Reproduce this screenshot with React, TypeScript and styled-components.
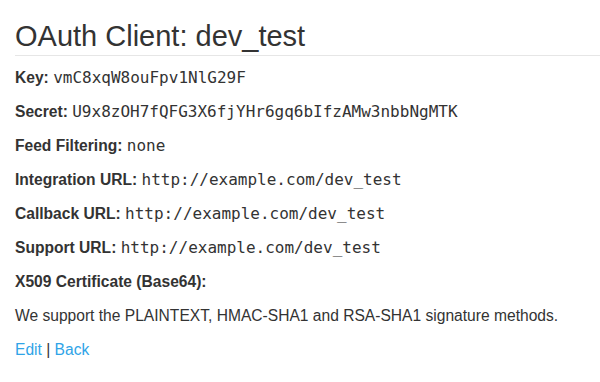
import React from 'react';
import styled, { createGlobalStyle } from 'styled-components';

const GlobalStyle = createGlobalStyle`
  body {
    margin: 0;
    background: #fff;
    font-family: "Liberation Sans", Arial, sans-serif;
    font-size: 15.6px;
    color: #333;
  }
`;

const Page = styled.div`
  padding: 0 0 0 15px;
`;

const PageHeader = styled.h1`
  margin: 20px 0 10px;
  padding-bottom: 2px;
  border-bottom: 1px solid #e6e6e6;
  font-size: 29px;
  font-weight: 400;
  line-height: 33px;
  color: #333;
`;

const Field = styled.p`
  margin: 0 0 10px;
  line-height: 24px;
`;

const Label = styled.strong`
  font-weight: 700;
`;

const Code = styled.span`
  font-family: "DejaVu Sans Mono", "Liberation Mono", monospace;
  font-size: 16px;
  color: #333;
`;

const Link = styled.a`
  color: #2fa4e7;
  text-decoration: none;
`;

const fields: { label: string; value?: string }[] = [
  { label: 'Key', value: 'vmC8xqW8ouFpv1NlG29F' },
  { label: 'Secret', value: 'U9x8zOH7fQFG3X6fjYHr6gq6bIfzAMw3nbbNgMTK' },
  { label: 'Feed Filtering', value: 'none' },
  { label: 'Integration URL', value: 'http://example.com/dev_test' },
  { label: 'Callback URL', value: 'http://example.com/dev_test' },
  { label: 'Support URL', value: 'http://example.com/dev_test' },
  { label: 'X509 Certificate (Base64)' },
];

const App: React.FC = () => (
  <>
    <GlobalStyle />
    <Page>
      <PageHeader>OAuth Client: dev_test</PageHeader>
      {fields.map(f => (
        <Field key={f.label}>
          <Label>{f.label}:</Label>
          {f.value && <> <Code>{f.value}</Code></>}
        </Field>
      ))}
      <Field>We support the PLAINTEXT, HMAC-SHA1 and RSA-SHA1 signature methods.</Field>
      <Field>
        <Link href="#">Edit</Link> | <Link href="#">Back</Link>
      </Field>
    </Page>
  </>
);

export default App;
